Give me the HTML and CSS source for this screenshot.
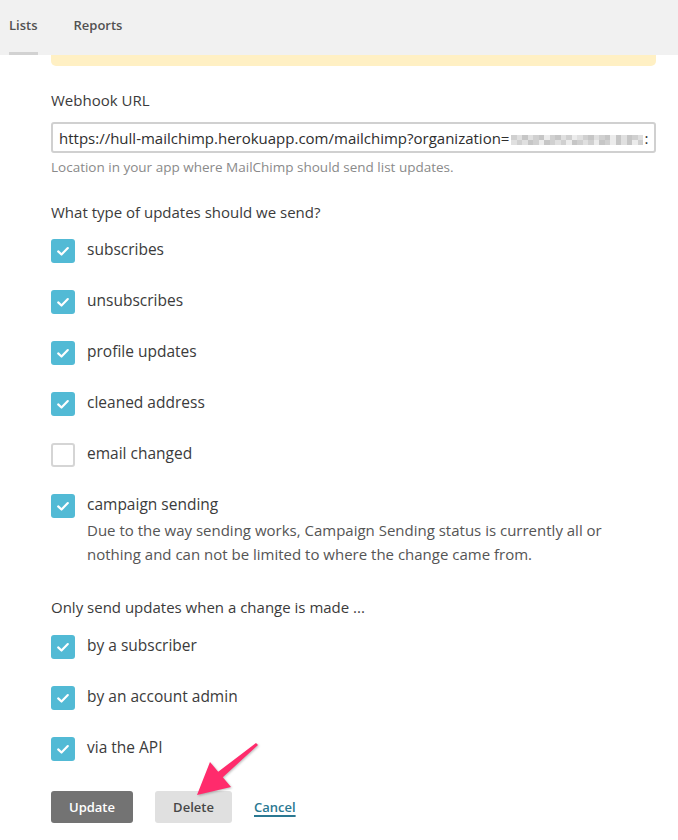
FILE: index.html
```html
<!DOCTYPE html>
<html>
<head>
<meta charset="utf-8">
<link rel="stylesheet" href="styles.css">
</head>
<body>
<header class="topbar">
  <nav class="tabs">
    <a class="tab tab-active">Lists</a>
    <a class="tab">Reports</a>
  </nav>
</header>
<main class="content">
  <div class="notice"></div>

  <label class="field-label">Webhook URL</label>
  <div class="url-input">
    <span class="url-text">https://hull-mailchimp.herokuapp.com/mailchimp?organization=</span><span class="pixels"><i class="c2"></i><i class="c1"></i><i class="c3"></i><i class="c1"></i><i class="c2"></i><i class="c3"></i><i class="c4"></i><i class="c2"></i><i class="c3"></i><i class="c1"></i><i class="c2"></i><i class="c4"></i><i class="c1"></i><i class="c2"></i><i class="c3"></i><i class="c1"></i><i class="c2"></i><i class="c3"></i><i class="c4"></i><i class="c3"></i><i class="c1"></i><i class="c3"></i><i class="c2"></i><i class="c1"></i><i class="c1"></i><i class="c2"></i><i class="c1"></i><i class="c3"></i><i class="c2"></i><i class="c4"></i><i class="c3"></i><i class="c2"></i><i class="c1"></i><i class="c2"></i><i class="c4"></i><i class="c3"></i><i class="c2"></i><i class="c1"></i><i class="c2"></i><i class="c4"></i><i class="c3"></i><i class="c2"></i><i class="c4"></i><i class="c3"></i><i class="c1"></i><i class="c3"></i><i class="c4"></i><i class="c2"></i></span><span class="url-tail">:</span>
  </div>
  <p class="help">Location in your app where MailChimp should send list updates.</p>

  <h3 class="group-title">What type of updates should we send?</h3>
  <ul class="checks">
    <li class="check-row"><span class="box checked"><svg viewBox="0 0 24 24"><path d="M7.2 12.4l3.3 3.1 6.3-6.4"/></svg></span><span class="check-label">subscribes</span></li>
    <li class="check-row"><span class="box checked"><svg viewBox="0 0 24 24"><path d="M7.2 12.4l3.3 3.1 6.3-6.4"/></svg></span><span class="check-label">unsubscribes</span></li>
    <li class="check-row"><span class="box checked"><svg viewBox="0 0 24 24"><path d="M7.2 12.4l3.3 3.1 6.3-6.4"/></svg></span><span class="check-label">profile updates</span></li>
    <li class="check-row"><span class="box checked"><svg viewBox="0 0 24 24"><path d="M7.2 12.4l3.3 3.1 6.3-6.4"/></svg></span><span class="check-label">cleaned address</span></li>
    <li class="check-row"><span class="box"></span><span class="check-label">email changed</span></li>
    <li class="check-row"><span class="box checked"><svg viewBox="0 0 24 24"><path d="M7.2 12.4l3.3 3.1 6.3-6.4"/></svg></span>
      <div class="check-body">
        <span class="check-label">campaign sending</span>
        <p class="check-desc">Due to the way sending works, Campaign Sending status is currently all or nothing and can not be limited to where the change came from.</p>
      </div>
    </li>
  </ul>

  <h3 class="group-title second">Only send updates when a change is made ...</h3>
  <ul class="checks checks-second">
    <li class="check-row"><span class="box checked"><svg viewBox="0 0 24 24"><path d="M7.2 12.4l3.3 3.1 6.3-6.4"/></svg></span><span class="check-label">by a subscriber</span></li>
    <li class="check-row"><span class="box checked"><svg viewBox="0 0 24 24"><path d="M7.2 12.4l3.3 3.1 6.3-6.4"/></svg></span><span class="check-label">by an account admin</span></li>
    <li class="check-row"><span class="box checked"><svg viewBox="0 0 24 24"><path d="M7.2 12.4l3.3 3.1 6.3-6.4"/></svg></span><span class="check-label">via the API</span></li>
  </ul>

  <div class="actions">
    <button class="btn btn-update">Update</button>
    <button class="btn btn-delete">Delete</button>
    <a class="cancel">Cancel</a>
  </div>
</main>

<svg class="arrow" viewBox="0 0 75 70" width="75" height="70">
  <polygon points="66,7.9 68,10.1 32.8,42.2 41,52 7,60 20,27 28.2,36.8"/>
</svg>
</body>
</html>
```

FILE: styles.css
```css
* { box-sizing: border-box; }

body {
  margin: 0;
  font-family: "Open Sans", "Liberation Sans", sans-serif;
  color: #3f3f3f;
  background: #fff;
  position: relative;
  width: 678px;
  height: 840px;
  overflow: hidden;
}

.topbar {
  height: 55px;
  background: #f1f1f1;
}

.tabs {
  display: flex;
  height: 55px;
  padding-left: 9px;
  gap: 36px;
}

.tab {
  display: block;
  height: 55px;
  padding-top: 15px;
  font-size: 13px;
  line-height: 20px;
  font-weight: 600;
  color: #525252;
}

.tab-active {
  border-bottom: 3px solid #d2d2d2;
}

.content {
  margin: 0 22px 0 51px;
}

.notice {
  height: 11px;
  background: #fff0c4;
  border-radius: 0 0 5px 5px;
}

.field-label {
  display: block;
  margin-top: 23px;
  font-size: 15px;
  line-height: 22px;
  color: #3b3b3b;
}

.url-input {
  margin-top: 11px;
  height: 31px;
  border: 2px solid #d0d0d0;
  border-radius: 3px;
  padding: 0 6px;
  display: flex;
  align-items: center;
  white-space: nowrap;
  overflow: hidden;
  font-size: 15px;
  color: #2e2e2e;
}

.url-text { flex: none; }

.pixels {
  flex: none;
  display: grid;
  grid-template-columns: repeat(24, 5.5px);
  grid-auto-rows: 5px;
  margin-top: 4px;
  margin-left: 2px;
}

.pixels i { display: block; }
.pixels .c1 { background: #e0e0e0; }
.pixels .c2 { background: #d0d0d0; }
.pixels .c3 { background: #c6c6c6; }
.pixels .c4 { background: #ececec; }

.url-tail { flex: none; margin-left: 1px; }

.help {
  margin: 5px 0 0;
  font-size: 13.5px;
  line-height: 18px;
  color: #8a8a8a;
}

.group-title {
  margin: 25px 0 0;
  font-size: 15px;
  line-height: 22px;
  font-weight: 400;
  color: #3b3b3b;
}

.group-title.second { margin-top: 30px; }

.checks {
  list-style: none;
  margin: 16px 0 0;
  padding: 0;
  display: flex;
  flex-direction: column;
  gap: 27px;
}

.checks-second { margin-top: 17px; }

.check-row {
  display: flex;
  align-items: flex-start;
  gap: 12px;
}

.box {
  flex: none;
  width: 24px;
  height: 24px;
  border-radius: 3px;
  border: 2px solid #d5d5d5;
  background: #fff;
}

.box.checked {
  border: none;
  background: #52bad5;
}

.box svg {
  display: block;
  width: 24px;
  height: 24px;
  fill: none;
  stroke: #fff;
  stroke-width: 2.2;
  stroke-linecap: round;
  stroke-linejoin: round;
}

.check-label {
  font-size: 15.5px;
  line-height: 20px;
  color: #3b3b3b;
}

.check-body .check-label { display: block; }

.check-desc {
  margin: 4px 0 0;
  font-size: 15px;
  line-height: 24px;
  color: #555;
}

.actions {
  margin-top: 30px;
  display: flex;
  align-items: center;
  gap: 22px;
}

.btn {
  height: 32px;
  border: none;
  border-radius: 3px;
  font-family: "Open Sans", "Liberation Sans", sans-serif;
  font-size: 13px;
  font-weight: 600;
  padding: 0;
}

.btn-update {
  width: 82px;
  background: #737373;
  color: #fff;
}

.btn-delete {
  width: 77px;
  background: #e0e0e0;
  color: #474747;
}

.cancel {
  font-size: 13px;
  font-weight: 600;
  color: #2a7892;
  text-decoration: underline;
  text-decoration-thickness: 1.5px;
  text-underline-offset: 3px;
}

.arrow {
  position: absolute;
  left: 190px;
  top: 735px;
  fill: #ff2b6c;
  filter: drop-shadow(1px 1px 1px rgba(0,0,0,0.25));
}
```
